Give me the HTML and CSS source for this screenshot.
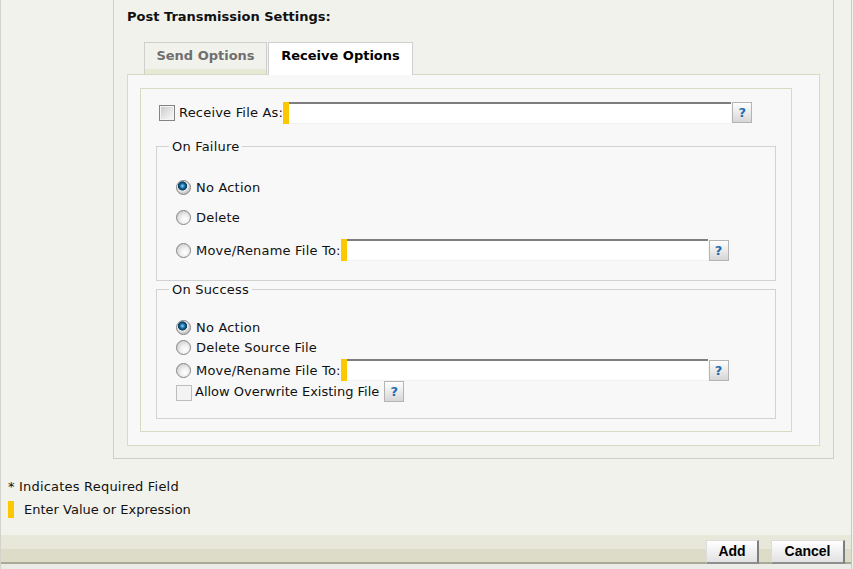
FILE: index.html
```html
<!DOCTYPE html>
<html>
<head>
<meta charset="utf-8">
<title>Post Transmission Settings</title>
<link rel="stylesheet" href="styles.css">
</head>
<body>
<div class="page">
  <div class="main">
    <div class="panel">
      <div class="heading">Post Transmission Settings:</div>
      <div class="tabs">
        <div class="tab tab-off">Send Options</div>
        <div class="tab tab-on">Receive Options</div>
      </div>
      <div class="tabbox">
        <div class="inner">
          <div class="row-receive">
            <input type="checkbox" class="check">
            <span class="lbl">Receive File As:</span>
            <span class="req"></span>
            <input type="text" class="field field-wide">
            <span class="help">?</span>
          </div>

          <div class="group group-fail">
            <div class="legend">On Failure</div>
            <label class="opt opt-first"><input type="radio" name="fail" class="radio" checked><span>No Action</span></label>
            <label class="opt opt-second"><input type="radio" name="fail" class="radio"><span>Delete</span></label>
            <div class="opt opt-move opt-move-fail"><input type="radio" name="fail" class="radio"><span class="lbl">Move/Rename File To:</span><span class="req"></span><input type="text" class="field field-short"><span class="help">?</span></div>
          </div>

          <div class="group group-success">
            <div class="legend">On Success</div>
            <label class="opt opt-first-s"><input type="radio" name="succ" class="radio" checked><span>No Action</span></label>
            <label class="opt"><input type="radio" name="succ" class="radio"><span>Delete Source File</span></label>
            <div class="opt opt-move opt-move-succ"><input type="radio" name="succ" class="radio"><span class="lbl">Move/Rename File To:</span><span class="req"></span><input type="text" class="field field-short"><span class="help">?</span></div>
            <div class="opt opt-overwrite"><input type="checkbox" class="check check-light"><span class="tight">Allow Overwrite Existing File</span><span class="help help-gap">?</span></div>
          </div>
        </div>
      </div>
    </div>
  </div>

  <div class="notes">
    <div class="note">* Indicates Required Field</div>
    <div class="note note-expr"><span class="req req-note"></span><span class="tight">Enter Value or Expression</span></div>
  </div>

  <div class="footer">
    <button class="btn btn-add">Add</button>
    <button class="btn btn-cancel">Cancel</button>
  </div>
  <div class="base"></div>
</div>
</body>
</html>
```

FILE: styles.css
```css
html, body {
  margin: 0;
  padding: 0;
}

body {
  font-family: "DejaVu Sans", Verdana, sans-serif;
  font-size: 13px;
  letter-spacing: 0.2px;
  color: #111;
  background: #f2f2ec;
}

.tight {
  letter-spacing: 0;
}

.page {
  box-sizing: border-box;
  width: 852px;
  height: 569px;
  border-left: 1px solid #d3d3cb;
  border-right: 1px solid #c9c9c9;
  background: #f2f2ec;
  display: flex;
  flex-direction: column;
}

.main {
  padding-left: 112px;
}

.panel {
  box-sizing: border-box;
  width: 721px;
  border: 1px solid #cdcdcd;
  border-top: 0;
  padding: 9px 13px 12px 13px;
}

.heading {
  font-weight: bold;
  letter-spacing: 0;
  line-height: 16px;
  height: 16px;
}

.tabs {
  display: flex;
  align-items: flex-start;
  height: 33px;
  margin: 17px 0 -1px 17px;
}

.tab {
  box-sizing: border-box;
  border: 1px solid #cfcfcf;
  border-bottom: 0;
  padding-top: 5px;
  line-height: 16px;
  text-align: center;
  font-weight: bold;
  letter-spacing: 0;
}

.tab-off {
  width: 123px;
  height: 32px;
  color: #6f6f6f;
  background: linear-gradient(#f2f2ec 0, #f2f2ec 26px, #e6ead4 26px);
}

.tab-on {
  width: 145px;
  height: 33px;
  margin-left: 1px;
  background: #fff;
  color: #000;
  position: relative;
  z-index: 1;
}

.tabbox {
  box-sizing: border-box;
  width: 693px;
  border: 1px solid #dadac4;
  background: #f8f8f8;
  padding: 13px 0 13px 12px;
}

.inner {
  box-sizing: border-box;
  width: 652px;
  border: 1px solid #dadac4;
  background: #f8f8f8;
  padding: 0 15px 12px 15px;
}

.row-receive {
  display: flex;
  align-items: center;
  height: 23px;
  margin-top: 12px;
}

.check {
  appearance: none;
  -webkit-appearance: none;
  box-sizing: border-box;
  width: 16px;
  height: 16px;
  margin: 1px 4px 0 3px;
  border: 1px solid #838383;
  background: linear-gradient(135deg, #c6c6c6 0%, #e6e6e6 55%, #fbfbfb 100%);
  box-shadow: inset 0 0 0 1px #f4f4f4;
  flex: none;
}

.check-light {
  margin: 0 3px 0 0;
  border-color: #bdbdbd;
  background: #f3f3f3;
  box-shadow: none;
}

.lbl {
  white-space: nowrap;
}

.req {
  flex: none;
  width: 6px;
  height: 22px;
  margin-left: 0;
  background: #fcc800;
}

.field {
  box-sizing: border-box;
  height: 22px;
  margin: 1px 0 0 0;
  padding: 0;
  border: 0;
  border-top: 2px solid #7e7e7e;
  border-bottom: 1px solid #f1f1f1;
  background: #fff;
  flex: none;
  font: inherit;
}

.field-wide {
  width: 442px;
}

.field-short {
  width: 361px;
}

.help {
  box-sizing: border-box;
  flex: none;
  width: 20px;
  height: 21px;
  margin: 0 0 1px 1px;
  border: 1px solid #b4b4b4;
  background: linear-gradient(#ffffff, #d6d6d6);
  color: #1d6db0;
  font-weight: bold;
  font-size: 13px;
  letter-spacing: 0;
  line-height: 19px;
  text-align: center;
}

.help-gap {
  margin-left: 5px;
}

.group {
  border: 1px solid #d2d2d2;
}

.group-fail {
  margin-top: 22px;
  padding-bottom: 19px;
}

.group-success {
  margin-top: 8px;
  padding-bottom: 16px;
}

.legend {
  display: table;
  margin: -8px 0 0 12px;
  padding: 0 3px;
  line-height: 16px;
  background: #f8f8f8;
}

.opt {
  display: flex;
  align-items: center;
  height: 20px;
  padding-left: 19px;
}

.opt-first {
  margin-top: 22px;
}

.opt-second {
  margin-top: 10px;
}

.opt-move {
  height: 22px;
}

.opt-move-fail {
  margin-top: 12px;
}

.opt-move-succ {
  margin-top: 2px;
}

.opt-first-s {
  margin-top: 19px;
}

.opt-overwrite {
  height: 21px;
}

.opt-overwrite .check {
  margin-top: 2px;
}

.opt-move .field {
  margin-top: 0;
}

.opt-move .help {
  margin: 1px 0 0 1px;
}

.radio {
  appearance: none;
  -webkit-appearance: none;
  box-sizing: border-box;
  flex: none;
  width: 15px;
  height: 15px;
  margin: 0 5px 0 0;
  border-radius: 50%;
  border: 1px solid #858585;
  background: radial-gradient(circle at 62% 65%, #ffffff 0, #f1f1f1 35%, #d2d2d2 75%, #bcbcbc 100%);
}

.radio:checked {
  background: radial-gradient(circle at 42% 38%, #a8dcf8 0, #3a8fc6 1.5px, #0f5683 3px, #0a3d60 4.3px, #f0f0f0 4.9px, #dedede 6px, #c4c4c4 7.5px);
}

.notes {
  padding: 20px 0 0 7px;
}

.note {
  line-height: 16px;
}

.note-expr {
  display: flex;
  align-items: center;
  margin-top: 6px;
}

.req-note {
  height: 17px;
  margin: 0 10px 0 0;
}

.footer {
  margin-top: auto;
  height: 29px;
  box-sizing: border-box;
  padding: 5px 6px 0 0;
  background: linear-gradient(#e7e7da 0, #e7e7da 14px, #dcdcc8 14px);
  border-bottom: 2px solid #a9a995;
  display: flex;
  justify-content: flex-end;
  align-items: flex-start;
  gap: 12px;
}

.base {
  height: 5px;
  background: #ebebe8;
}

.btn {
  box-sizing: border-box;
  height: 24px;
  padding: 0 0 2px 0;
  margin: 0;
  font-family: "Liberation Sans", Arial, sans-serif;
  font-weight: bold;
  font-size: 14px;
  letter-spacing: 0;
  line-height: 18px;
  color: #000;
  background: linear-gradient(#ffffff, #e2e2e2);
  border: 1px solid #dcdcdc;
  border-right: 2px solid #7e7e7e;
  border-bottom: 2px solid #8e8e8e;
}

.btn-add {
  width: 53px;
}

.btn-cancel {
  width: 74px;
}
```
